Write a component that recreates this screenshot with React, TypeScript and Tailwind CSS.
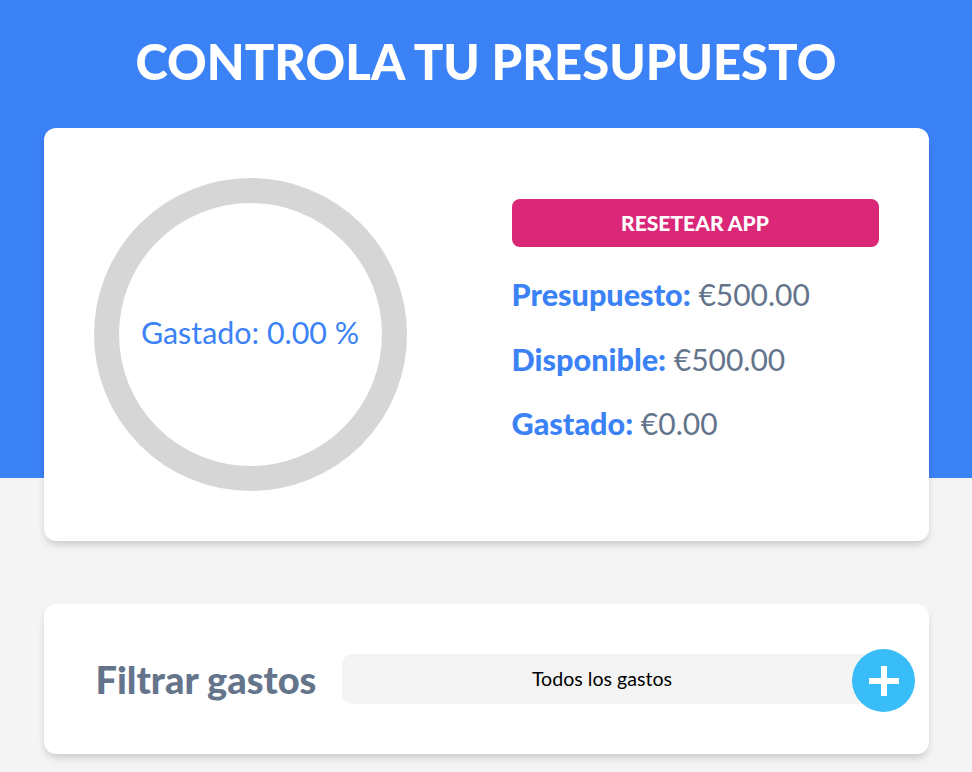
import React from "react";

export default function App() {
  return (
    <div className="min-h-screen font-['Lato',sans-serif] bg-[linear-gradient(to_bottom,#3b82f6_0px,#3b82f6_478px,#f4f4f4_478px)] pb-10">
      <header className="pt-[37px] pb-[42px]">
        <h1 className="text-center text-white text-[49px] leading-none font-black">
          CONTROLA TU PRESUPUESTO
        </h1>
      </header>
      <main className="mx-auto w-[885px]">
        <section className="bg-white rounded-xl shadow-[0_5px_8px_-2px_rgba(0,0,0,0.2)] p-[50px] flex justify-between">
          <div className="grid place-items-center w-[313px] h-[313px]">
            <svg viewBox="0 0 100 100" className="w-[313px] h-[313px] [grid-area:1/1]">
              <circle cx="50" cy="50" r="46" fill="none" stroke="#d6d6d6" strokeWidth="8" />
            </svg>
            <p className="[grid-area:1/1] text-[30.4px] leading-none text-[#3b82f6] -mt-[4px]">
              Gastado: 0.00 %
            </p>
          </div>
          <div className="w-[367px] pt-[21px]">
            <button className="w-full h-[48px] rounded-lg bg-[#db2777] text-white font-black text-[21px] uppercase">
              Resetear App
            </button>
            <div className="mt-[32px] flex flex-col gap-[33px]">
              <p className="text-[30px] leading-none text-[#64748b]">
                <span className="font-black text-[#3b82f6] text-[30.6px]">Presupuesto:</span> €500.00
              </p>
              <p className="text-[30px] leading-none text-[#64748b]">
                <span className="font-black text-[#3b82f6] text-[30.6px]">Disponible:</span> €500.00
              </p>
              <p className="text-[30px] leading-none text-[#64748b]">
                <span className="font-black text-[#3b82f6] text-[30.6px]">Gastado:</span> €0.00
              </p>
            </div>
          </div>
        </section>

        <section className="mt-[63px] bg-white rounded-xl shadow-[0_5px_8px_-2px_rgba(0,0,0,0.2)] px-[50px] py-[50px] flex items-center gap-[26px]">
          <label className="pl-[2px] text-[38px] leading-none font-black text-[#64748b]">
            Filtrar gastos
          </label>
          <div className="flex-1 pr-[17px] h-[50px] rounded-[10px] bg-[#f4f4f4] flex items-center justify-center text-[19.6px] text-black">
            Todos los gastos
          </div>
        </section>
      </main>

      <button className="fixed right-[57px] bottom-[60px] w-[63px] h-[63px] rounded-full bg-[#38bdf8] flex items-center justify-center">
        <svg viewBox="0 0 30 30" className="w-[30px] h-[30px]">
          <path d="M15 0V30M0 15H30" stroke="white" strokeWidth="6" />
        </svg>
      </button>
    </div>
  );
}
